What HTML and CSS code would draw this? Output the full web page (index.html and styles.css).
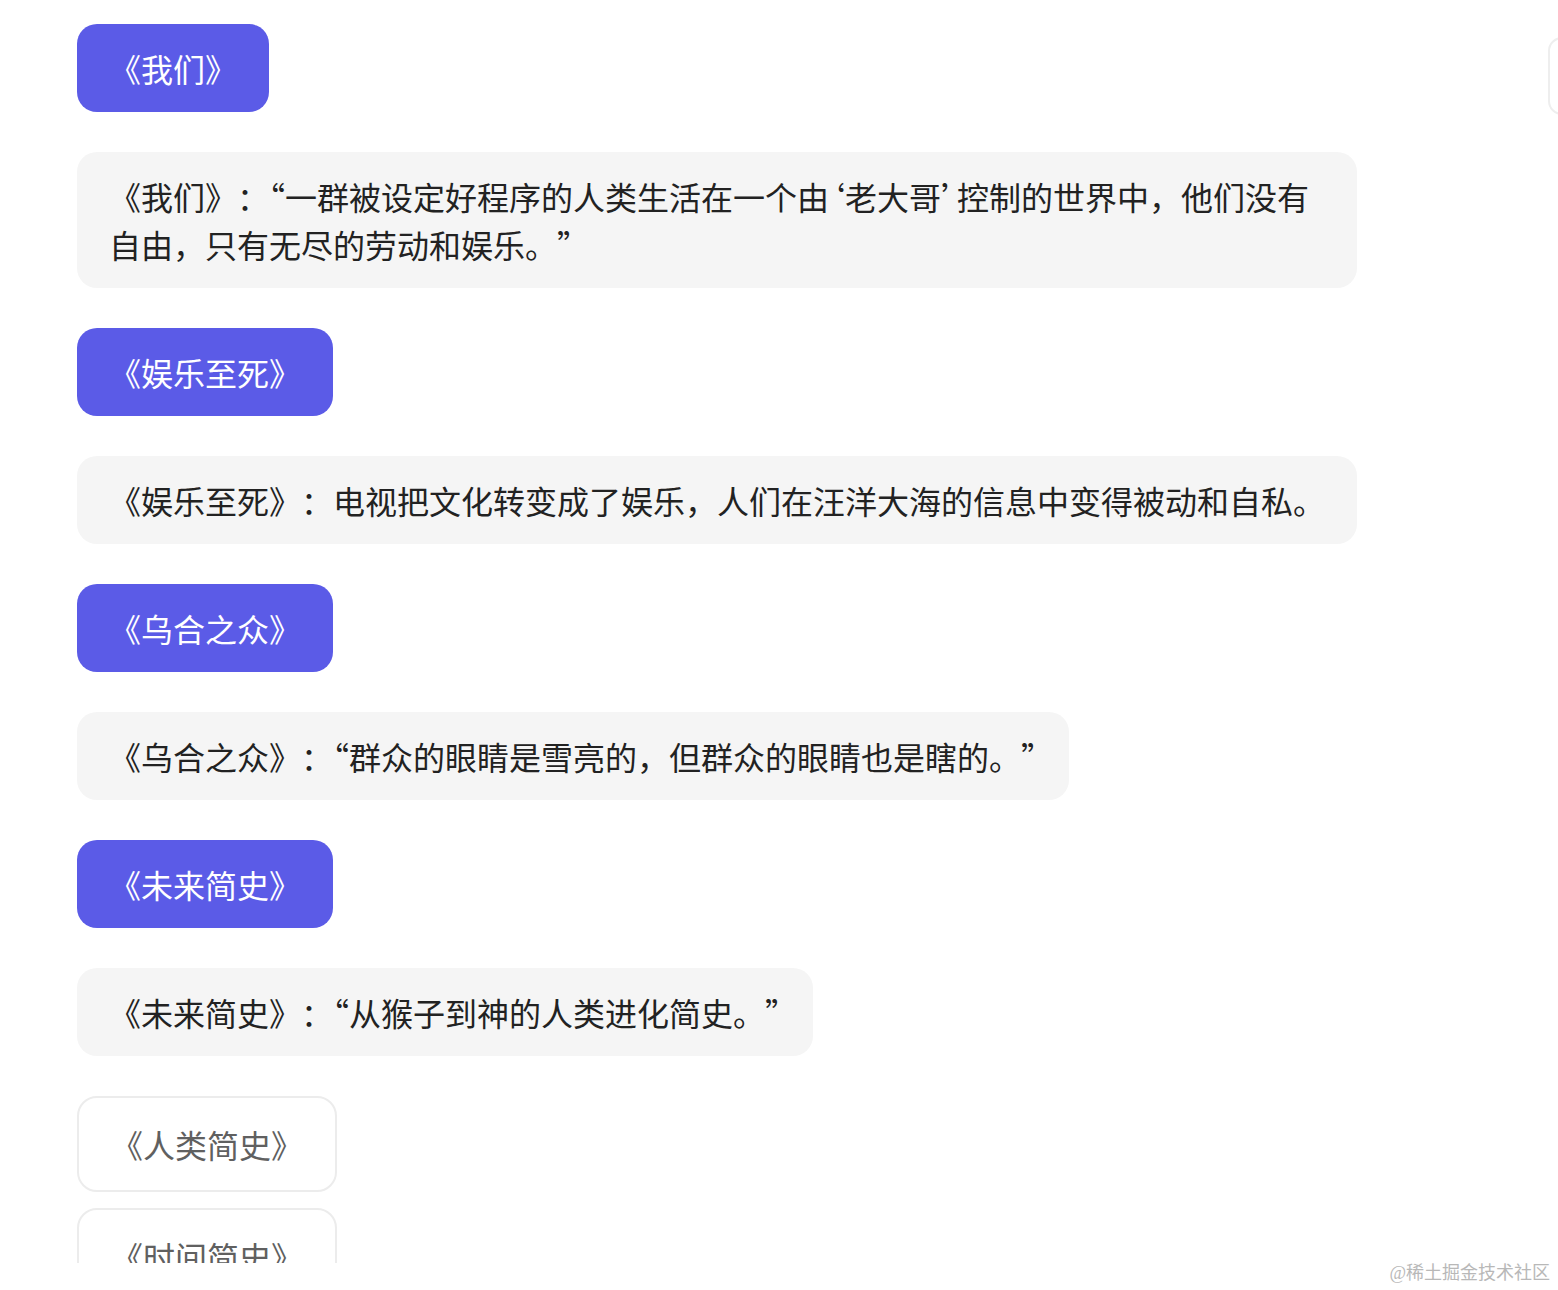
FILE: index.html
```html
<!DOCTYPE html>
<html lang="zh-CN">
<head>
<meta charset="utf-8">
<title>书单</title>
<link rel="stylesheet" href="styles.css">
</head>
<body>
<div class="viewport">
  <div class="chat">
    <div class="btn btn-primary">《我们》</div>
    <div class="bubble">《我们》：<span class="q">“</span>一群被设定好程序的人类生活在一个由<span class="q">‘</span>老大哥<span class="q">’</span>控制的世界中，他们没有自由，只有无尽的劳动和娱乐。<span class="q">”</span></div>
    <div class="btn btn-primary">《娱乐至死》</div>
    <div class="bubble">《娱乐至死》：电视把文化转变成了娱乐，人们在汪洋大海的信息中变得被动和自私。</div>
    <div class="btn btn-primary">《乌合之众》</div>
    <div class="bubble">《乌合之众》：<span class="q">“</span>群众的眼睛是雪亮的，但群众的眼睛也是瞎的。<span class="q">”</span></div>
    <div class="btn btn-primary">《未来简史》</div>
    <div class="bubble">《未来简史》：<span class="q">“</span>从猴子到神的人类进化简史。<span class="q">”</span></div>
    <div class="options">
      <div class="btn btn-outline">《人类简史》</div>
      <div class="btn btn-outline">《时间简史》</div>
    </div>
  </div>
  <div class="edge-card"></div>
</div>
<div class="watermark">@稀土掘金技术社区</div>
</body>
</html>
```
FILE: styles.css
```css
html, body {
  margin: 0;
  padding: 0;
  background: #ffffff;
}
body {
  font-family: "Noto Sans CJK SC", "Noto Sans", sans-serif;
  text-spacing-trim: space-all;
  height: 1290px;
  overflow: hidden;
  position: relative;
}
.viewport {
  height: 1263px;
  overflow: hidden;
  position: relative;
}
.chat {
  display: flex;
  flex-direction: column;
  align-items: flex-start;
  gap: 40px;
  padding: 24px 0 0 77px;
}
.btn {
  font-size: 32px;
  line-height: 48px;
  padding: 20px 32px;
  border-radius: 20px;
  white-space: nowrap;
}
.btn-primary {
  background: #5b5be7;
  color: #ffffff;
}
.bubble {
  font-size: 32px;
  line-height: 48px;
  padding: 20px 32px;
  border-radius: 20px;
  background: #f5f5f5;
  color: #222222;
  max-width: 1216px;
}
.q {
  font-feature-settings: "halt" 1;
}
.options {
  display: flex;
  flex-direction: column;
  align-items: flex-start;
  gap: 16px;
}
.btn-outline {
  background: #ffffff;
  color: #606060;
  border: 2px solid #ececec;
  padding: 22px 32px;
}
.edge-card {
  position: absolute;
  left: 1548px;
  top: 37px;
  width: 60px;
  height: 74px;
  border: 2px solid #eeeeee;
  border-radius: 14px;
  background: #ffffff;
}
.watermark {
  position: absolute;
  right: 8px;
  bottom: 6px;
  font-family: "Liberation Serif", "Noto Sans CJK SC", serif;
  font-size: 18px;
  color: #b8b8b8;
}
```
